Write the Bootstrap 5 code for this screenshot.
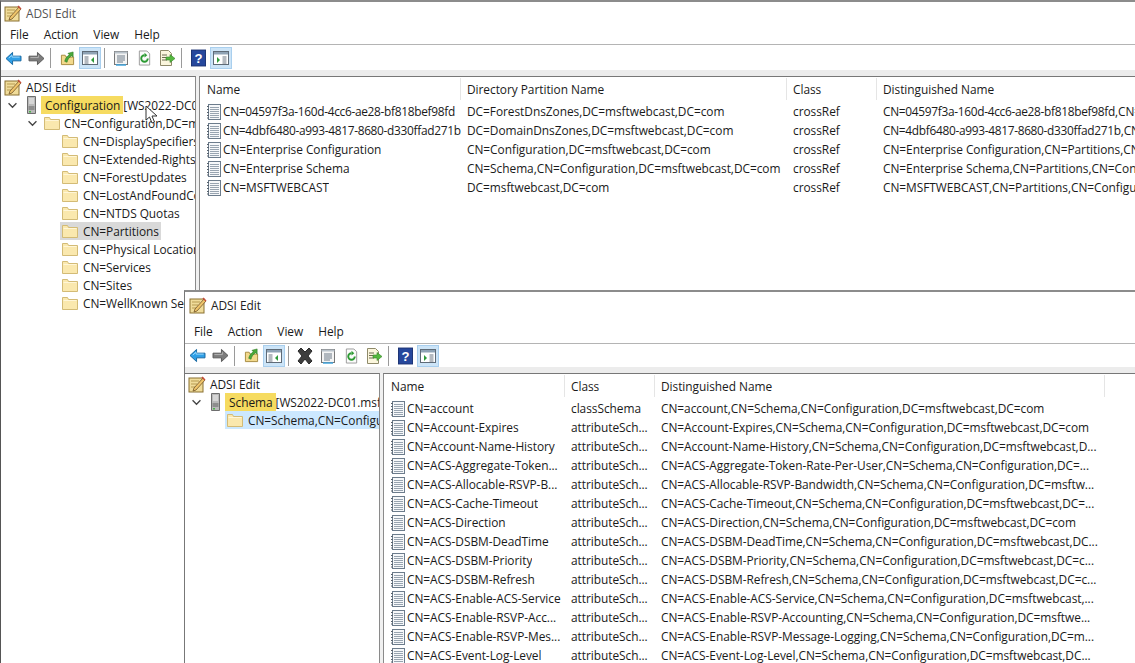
<!DOCTYPE html>
<html lang="en">
<head>
  <meta charset="UTF-8">
  <title>ADSI Edit</title>
  <link href="https://cdn.jsdelivr.net/npm/bootstrap@5.3.3/dist/css/bootstrap.min.css" rel="stylesheet">
  <style>
    html, body { height: 663px; overflow: hidden; background: #fff; }
    body { font-family: "Open Sans", "Liberation Sans", sans-serif; font-size: 11.9px; letter-spacing: -.04px; color: #1a1a1a; line-height: 18px; }
    svg { flex: none; display: block; }
    .mmc-win { background: #fff; border-top: 2px solid #8c8c8c; border-left: 1px solid #555; display: flex; flex-direction: column; overflow: hidden; }
    .mmc-main { height: 663px; width: 1135px; }
    .mmc-sub { position: absolute; left: 184px; top: 290px; width: 951px; height: 373px; border-left-color: #777; }
    .mmc-title { height: 23px; padding: 0 0 2px 3px; gap: 4px; color: #555; }
    .mmc-sub .mmc-title { height: 27px; padding-left: 4px; color: #222; }
    .mmc-menu { height: 20px; padding: 0 0 2px 9px; gap: 15px; border-bottom: 1px solid #b4b4b4; }
    .mmc-sub .mmc-menu { height: 25px; padding-bottom: 1px; }
    .mmc-tools { height: 25px; padding: 1px 0 0 1px; gap: 1px; }
    .mmc-sub .mmc-tools { height: 23px; padding-top: 0; }
    .tool-btn { width: 22px; height: 22px; display: flex; align-items: center; justify-content: center; border: 1px solid transparent; }
    .tool-btn.on { background: #cce4f7; border-color: #a9cfee; }
    .tool-sep { width: 1px; height: 20px; background: #9a9a9a; margin: 0 4px 0 2px; }
    .mmc-band { height: 6px; background: #ececec; }
    .mmc-panes { flex: 1; min-height: 0; background: #f0f0f0; gap: 3px; }
    .tree-pane { width: 195px; flex: none; background: #fff; border-top: 1px solid #777; border-right: 1px solid #8a8a8a; padding: 1px 0 0 3px; overflow: hidden; }
    .list-pane { flex: 1; background: #fff; border-top: 1px solid #777; border-left: 1px solid #8a8a8a; overflow: hidden; min-width: 0; }
    .tree-row { height: 18px; white-space: nowrap; overflow: hidden; }
    .tree-spacer { flex: none; }
    .tree-chev { width: 16px; flex: none; display: flex; justify-content: center; }
    .tree-node { height: 18px; flex: none; padding: 0 2px; align-items: center; }
    .tree-node.wide { flex: 1; overflow: hidden; min-width: 0; }
    .kid-label { margin-left: 5px; }
    .root-icon { margin-left: 5px; }
    .root-label { flex: none; margin-left: 4px; padding: 0 0 0 4px; height: 18px; width: auto; }
    .root-rest { flex: none; }
    .top-icon { margin-left: 4px; }
    .top-label { margin-left: 4px; flex: none; }
    .adsi-label { margin-left: 4px; flex: none; }
    .hl-yellow { background: #f6db60; padding-right: 3px; }
    .hl-gray { background: #d9d9d9; }
    .hl-blue { background: #cce8ff; }
    .hdr-row { height: 25px; padding-top: 1px; }
    .hdr-cell, .data-cell { padding-left: 6px; white-space: nowrap; overflow: hidden; flex: none; }
    .hdr-cell { height: 22px; line-height: 22px; border-right: 1px solid #e5e5e5; }
    .hdr-cell.first { padding-left: 7px; }
    .data-row { height: 19px; line-height: 19px; padding-left: 7px; white-space: nowrap; }
    .data-cell { height: 19px; }
    .data-cell.first { padding-left: 0; display: flex; align-items: center; gap: 2px; }
    .first-text { overflow: hidden; }
    .hex-id { letter-spacing: -.31px; }
    .mouse-arrow { position: absolute; left: 145px; top: 105px; }
  </style>
</head>
<body>
  <svg width="0" height="0" class="position-absolute">
    <symbol id="ic-snap" viewBox="0 0 18 18">
      <rect x="1" y="3" width="14" height="14" fill="#f0dc9a" stroke="#8a7030"/>
      <path d="M3 6h8M3 9h6M3 12h5" stroke="#b79b50"/>
      <path d="M6 13l9-10 2 2-9 10-3 1z" fill="#eec46a" stroke="#74562a" stroke-width=".8"/>
      <path d="M14 2l3 3" stroke="#c64a3a" stroke-width="1.5"/>
    </symbol>
    <symbol id="ic-server" viewBox="0 0 12 18">
      <path d="M2.500.500h8v17h-8z" fill="#b9b9b9" stroke="#6e6e6e"/>
      <path d="M4 3h5M4 5h5M4 7h5" stroke="#f2f2f2"/>
      <rect x="3.500" y="10" width="6" height="4" fill="#8d8d8d"/>
      <rect x="4" y="15" width="2" height="1.500" fill="#49b449"/>
    </symbol>
    <symbol id="ic-folder" viewBox="0 0 16 16">
      <path d="M.500 14.500v-12h5l1 2h9v10z" fill="#fae8ae" stroke="#d3bb76"/>
      <path d="M1.500 5.500h13" stroke="#fff6d8"/>
    </symbol>
    <symbol id="ic-item" viewBox="0 0 14 16">
      <rect x="1.500" y=".5" width="12" height="15" fill="#f6f8fa" stroke="#6c7c8c"/>
      <path d="M3 3.500h9M3 5.500h9M3 7.500h9M3 9.500h9M3 11.500h9M3 13.500h9" stroke="#98a4b0"/>
      <path d="M0 2.500h2M0 5.500h2M0 8.500h2M0 11.500h2M0 14h2" stroke="#59636e"/>
    </symbol>
    <symbol id="ic-back" viewBox="0 0 18 16">
      <path d="M1 8l7-6.500v4h9v5H8v4z" fill="#2f9fe6" stroke="#14649f"/>
      <path d="M4 7.500l3.500-3v2h8" fill="none" stroke="#9fdcff"/>
    </symbol>
    <symbol id="ic-fwd" viewBox="0 0 18 16">
      <path d="M17 8l-7-6.500v4H1v5h9v4z" fill="#7d7d7d" stroke="#555"/>
      <path d="M2.500 7h8.500V4.500" fill="none" stroke="#b5b5b5"/>
    </symbol>
    <symbol id="ic-up" viewBox="0 0 16 16">
      <path d="M1.500 14.500V4.500h4l1 2h8v8z" fill="#f2d98c" stroke="#a58a3e"/>
      <path d="M5 11c1-4 3-6 5-7L8.500 2.500 14 1v5.500L12.500 5C10 6.500 8 9 7.500 12z" fill="#49a83a" stroke="#2c7a22" stroke-width=".6"/>
    </symbol>
    <symbol id="ic-tree" viewBox="0 0 16 16">
      <rect x=".5" y="1.500" width="15" height="13" fill="#fff" stroke="#5f6b77"/>
      <path d="M1 2h14v2.500H1z" fill="#8fa3b5"/>
      <path d="M2.500 7h4M2.500 9h4M2.500 11h4M2.500 13h4" stroke="#6a7580"/>
      <path d="M12 7v6l-3-3z" fill="#2f9a3a"/>
    </symbol>
    <symbol id="ic-tree2" viewBox="0 0 16 16">
      <rect x=".5" y="1.500" width="15" height="13" fill="#fff" stroke="#5f6b77"/>
      <path d="M1 2h14v2.500H1z" fill="#8fa3b5"/>
      <path d="M9.500 7h4M9.500 9h4M9.500 11h4M9.500 13h4" stroke="#6a7580"/>
      <path d="M4 7v6l3-3z" fill="#2f9a3a"/>
    </symbol>
    <symbol id="ic-props" viewBox="0 0 16 16">
      <rect x="1.500" y="1.500" width="13" height="13" fill="#f4f4f4" stroke="#777"/>
      <path d="M1.500 1.500h13v2h-13z" fill="#b9c2ca"/>
      <path d="M4 6h8M4 8h8M4 10h8M4 12h6" stroke="#6d7a88"/>
      <path d="M3 15h10" stroke="#42a5dd" stroke-width="1.500"/>
    </symbol>
    <symbol id="ic-refresh" viewBox="0 0 16 16">
      <path d="M2.500.500h8l3 3v12h-11z" fill="#fbfbfb" stroke="#999"/>
      <path d="M8 5a3.500 3.500 0 1 0 3.500 3.500" fill="none" stroke="#2c9a32" stroke-width="2"/>
      <path d="M8 2.500v5l3-2.500z" fill="#2c9a32"/>
    </symbol>
    <symbol id="ic-export" viewBox="0 0 16 16">
      <path d="M1.500.500h8l3 3v12h-11z" fill="#fbf6dd" stroke="#8f8a6a"/>
      <path d="M3 5h5M3 7.500h4M3 10h5" stroke="#6d6a50"/>
      <path d="M7 7h4V4.500l5 4-5 4V10H7z" fill="#55b83f" stroke="#37852a" stroke-width=".6"/>
    </symbol>
    <symbol id="ic-help" viewBox="0 0 16 18">
      <rect x=".5" y=".5" width="15" height="17" fill="#26479c" stroke="#182f70"/>
      <text x="8" y="14" font-size="14" font-weight="700" text-anchor="middle" fill="#fff" font-family="Liberation Sans, sans-serif">?</text>
    </symbol>
    <symbol id="ic-del" viewBox="0 0 18 18">
      <path d="M2 4l3-3 4 4 4-4 3 3-4 5 4 5-3 3-4-5-4 5-3-3 4-5z" fill="#3e3e3e" stroke="#2a2a2a" stroke-linejoin="round"/>
    </symbol>
    <symbol id="ic-chev" viewBox="0 0 12 8">
      <path d="M1.500 1.500L6 6l4.500-4.500" fill="none" stroke="#444" stroke-width="1.500"/>
    </symbol>
  </svg>

  <div id="win1" class="mmc-win mmc-main"></div>
  <svg class="mouse-arrow" width="13" height="19" viewBox="0 0 13 19">
    <path d="M1 1v14l3.500-3 2.500 6 2.500-1-2.500-6h5z" fill="#fff" stroke="#333"/>
  </svg>
  <div id="win2" class="mmc-win mmc-sub"></div>

  <script>
    const ic = (id, w, h, cls) => `<svg width="${w}" height="${h}"${cls ? ` class="${cls}"` : ''}><use href="#${id}"/></svg>`;
    const hex = t => t.replace(/^(CN=[0-9a-f]{8}-[0-9a-f-]+)/, '<span class="hex-id">$1</span>');

    function toolbar(withDelete) {
      const b = (id, w, h, on) => `<div class="tool-btn${on ? ' on' : ''}">${ic(id, w, h)}</div>`;
      const sep = '<div class="tool-sep"></div>';
      return b('ic-back', 17, 15) + b('ic-fwd', 17, 15) + sep + b('ic-up', 15, 15) + b('ic-tree', 16, 16, true) + sep +
        (withDelete ? b('ic-del', 18, 18) : '') +
        b('ic-props', 16, 16) + b('ic-refresh', 15, 16) + b('ic-export', 16, 16) + sep +
        b('ic-help', 15, 18) + b('ic-tree2', 16, 16, true);
    }

    const row = inner => `<div class="tree-row d-flex align-items-center">${inner}</div>`;
    const chev = `<div class="tree-chev">${ic('ic-chev', 11, 7)}</div>`;
    const adsiRow = row(`${ic('ic-snap', 18, 18)}<span class="adsi-label">ADSI Edit</span>`);
    const rootRow = (name, rest) => row(`${chev}${ic('ic-server', 12, 18, 'root-icon')}<span class="root-label hl-yellow">${name}</span><span class="root-rest">${rest}</span>`);
    const kidRow = (pad, label, cls) => row(`<div class="tree-spacer" style="width:${pad}px"></div>
      <div class="tree-node d-flex ${cls || ''}">${ic('ic-folder', 16, 16)}<span class="kid-label">${label}</span></div>`);

    function listPane(cols, hdrs, rows) {
      let html = '<div class="hdr-row d-flex">';
      hdrs.forEach((h, i) => { html += `<div class="hdr-cell${i === 0 ? ' first' : ''}" style="width:${cols[i]}px">${h}</div>`; });
      html += '</div>';
      rows.forEach(r => {
        html += '<div class="data-row d-flex">';
        r.forEach((t, i) => {
          html += i === 0
            ? `<div class="data-cell first" style="width:${cols[0] - 7}px">${ic('ic-item', 14, 16)}<span class="first-text">${hex(t)}</span></div>`
            : `<div class="data-cell" style="width:${cols[i]}px">${hex(t)}</div>`;
        });
        html += '</div>';
      });
      return html;
    }

    function buildWin(el, opts) {
      el.innerHTML = `
        <div class="mmc-title d-flex align-items-center">${ic('ic-snap', 18, 18)}<span>ADSI Edit</span></div>
        <div class="mmc-menu d-flex align-items-center"><span>File</span><span>Action</span><span>View</span><span>Help</span></div>
        <div class="mmc-tools d-flex align-items-center">${toolbar(opts.del)}</div>
        <div class="mmc-band"></div>
        <div class="mmc-panes d-flex">
          <div class="tree-pane">${opts.tree}</div>
          <div class="list-pane">${opts.list}</div>
        </div>`;
    }

    const kids = ['DisplaySpecifiers', 'Extended-Rights', 'ForestUpdates', 'LostAndFoundConfig', 'NTDS Quotas', 'Partitions',
      'Physical Locations', 'Services', 'Sites', 'WellKnown Security'];

    const tree1 = adsiRow + rootRow('Configuration', '[WS2022-DC01.msftwebcast.com]') +
      row(`<div class="tree-spacer" style="width:20px"></div>${chev}${ic('ic-folder', 16, 16, 'top-icon')}<span class="top-label">CN=Configuration,DC=msftwebcast,DC=com</span>`) +
      kids.map(k => kidRow(56, 'CN=' + k, k === 'Partitions' ? 'hl-gray' : '')).join('');

    const tree2 = adsiRow + rootRow('Schema', '[WS2022-DC01.msftwebcast.com]') +
      kidRow(37, 'CN=Schema,CN=Configuration,DC=msftwebcast', 'hl-blue wide');

    const rows1 = [
      ['CN=04597f3a-160d-4cc6-ae28-bf818bef98fd', 'DC=ForestDnsZones,DC=msftwebcast,DC=com', 'crossRef', 'CN=04597f3a-160d-4cc6-ae28-bf818bef98fd,CN=Partitions'],
      ['CN=4dbf6480-a993-4817-8680-d330ffad271b', 'DC=DomainDnsZones,DC=msftwebcast,DC=com', 'crossRef', 'CN=4dbf6480-a993-4817-8680-d330ffad271b,CN=Partitions'],
      ['CN=Enterprise Configuration', 'CN=Configuration,DC=msftwebcast,DC=com', 'crossRef', 'CN=Enterprise Configuration,CN=Partitions,CN=Configuration'],
      ['CN=Enterprise Schema', 'CN=Schema,CN=Configuration,DC=msftwebcast,DC=com', 'crossRef', 'CN=Enterprise Schema,CN=Partitions,CN=Configuration'],
      ['CN=MSFTWEBCAST', 'DC=msftwebcast,DC=com', 'crossRef', 'CN=MSFTWEBCAST,CN=Partitions,CN=Configuration']
    ];

    const rows2 = [
      ['CN=account', 'classSchema', 'CN=account,CN=Schema,CN=Configuration,DC=msftwebcast,DC=com'],
      ['CN=Account-Expires', 'attributeSch...', 'CN=Account-Expires,CN=Schema,CN=Configuration,DC=msftwebcast,DC=com'],
      ['CN=Account-Name-History', 'attributeSch...', 'CN=Account-Name-History,CN=Schema,CN=Configuration,DC=msftwebcast,D...'],
      ['CN=ACS-Aggregate-Token...', 'attributeSch...', 'CN=ACS-Aggregate-Token-Rate-Per-User,CN=Schema,CN=Configuration,DC=...'],
      ['CN=ACS-Allocable-RSVP-B...', 'attributeSch...', 'CN=ACS-Allocable-RSVP-Bandwidth,CN=Schema,CN=Configuration,DC=msftw...'],
      ['CN=ACS-Cache-Timeout', 'attributeSch...', 'CN=ACS-Cache-Timeout,CN=Schema,CN=Configuration,DC=msftwebcast,DC=...'],
      ['CN=ACS-Direction', 'attributeSch...', 'CN=ACS-Direction,CN=Schema,CN=Configuration,DC=msftwebcast,DC=com'],
      ['CN=ACS-DSBM-DeadTime', 'attributeSch...', 'CN=ACS-DSBM-DeadTime,CN=Schema,CN=Configuration,DC=msftwebcast,DC...'],
      ['CN=ACS-DSBM-Priority', 'attributeSch...', 'CN=ACS-DSBM-Priority,CN=Schema,CN=Configuration,DC=msftwebcast,DC=c...'],
      ['CN=ACS-DSBM-Refresh', 'attributeSch...', 'CN=ACS-DSBM-Refresh,CN=Schema,CN=Configuration,DC=msftwebcast,DC=c...'],
      ['CN=ACS-Enable-ACS-Service', 'attributeSch...', 'CN=ACS-Enable-ACS-Service,CN=Schema,CN=Configuration,DC=msftwebcast,...'],
      ['CN=ACS-Enable-RSVP-Acc...', 'attributeSch...', 'CN=ACS-Enable-RSVP-Accounting,CN=Schema,CN=Configuration,DC=msftwe...'],
      ['CN=ACS-Enable-RSVP-Mes...', 'attributeSch...', 'CN=ACS-Enable-RSVP-Message-Logging,CN=Schema,CN=Configuration,DC=m...'],
      ['CN=ACS-Event-Log-Level', 'attributeSch...', 'CN=ACS-Event-Log-Level,CN=Schema,CN=Configuration,DC=msftwebcast,DC...']
    ];

    buildWin(document.getElementById('win1'), {
      del: false,
      tree: tree1,
      list: listPane([261, 326, 90, 400], ['Name', 'Directory Partition Name', 'Class', 'Distinguished Name'], rows1)
    });
    buildWin(document.getElementById('win2'), {
      del: true,
      tree: tree2,
      list: listPane([181, 90, 450], ['Name', 'Class', 'Distinguished Name'], rows2)
    });
  </script>
  <script src="https://cdn.jsdelivr.net/npm/bootstrap@5.3.3/dist/js/bootstrap.bundle.min.js"></script>
</body>
</html>
